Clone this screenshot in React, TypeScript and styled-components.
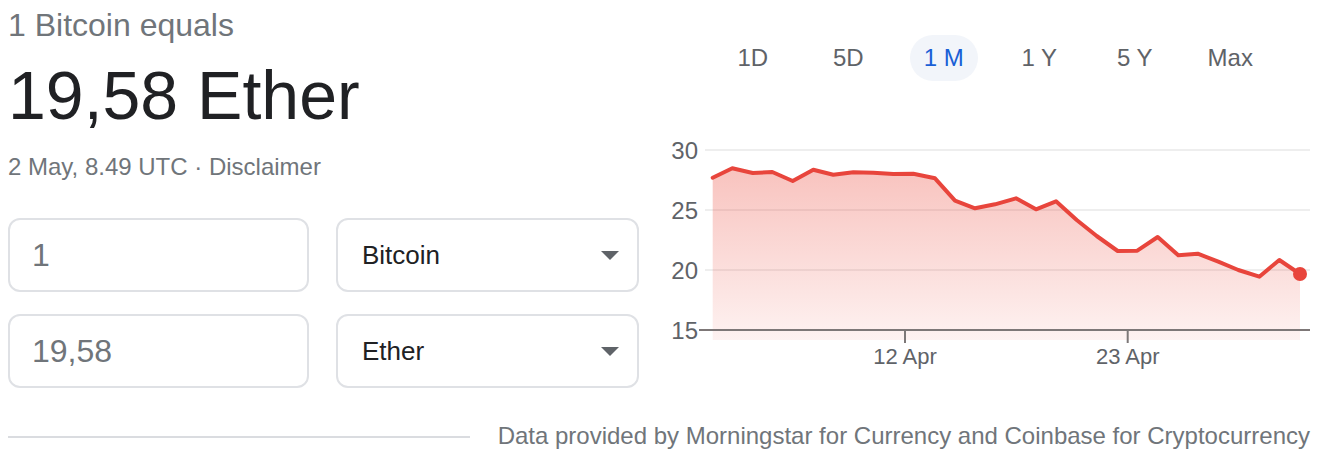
import React from "react";
import styled, { createGlobalStyle } from "styled-components";

const GlobalStyle = createGlobalStyle`
  html, body {
    margin: 0;
    padding: 0;
    background: #ffffff;
  }
  body {
    font-family: "Liberation Sans", Arial, sans-serif;
    width: 1332px;
    height: 472px;
    overflow: hidden;
  }
`;

const Page = styled.div`
  width: 1332px;
  display: flex;
  flex-direction: column;
`;

const Main = styled.div`
  display: flex;
  align-items: flex-start;
`;

const LeftCol = styled.div`
  width: 632px;
  padding-left: 8px;
  padding-top: 5px;
  display: flex;
  flex-direction: column;
`;

const Subtitle = styled.div`
  font-size: 32px;
  line-height: 40px;
  color: #70757a;
  white-space: nowrap;
`;

const Headline = styled.div`
  margin-top: 10px;
  font-size: 68px;
  line-height: 80px;
  color: #202124;
  white-space: nowrap;
`;

const Meta = styled.div`
  margin-top: 16px;
  font-size: 24px;
  line-height: 32px;
  color: #70757a;
  white-space: nowrap;
`;

const FieldGrid = styled.div`
  margin-top: 35px;
  display: grid;
  grid-template-columns: 301px 303px;
  column-gap: 27px;
  row-gap: 22px;
`;

const FieldBox = styled.div`
  box-sizing: border-box;
  height: 74px;
  border: 2px solid #dfe1e5;
  border-radius: 12px;
  display: flex;
  align-items: center;
  justify-content: space-between;
  padding: 0 18px 0 22px;
  background: #fff;
`;

const AmountText = styled.span`
  font-size: 32px;
  color: #70757a;
`;

const UnitText = styled.span`
  font-size: 26px;
  color: #202124;
  padding-left: 2px;
`;

const Caret = styled.span`
  width: 0;
  height: 0;
  border-left: 9px solid transparent;
  border-right: 9px solid transparent;
  border-top: 9px solid #5f6368;
`;

const RightCol = styled.div`
  margin-left: 20px;
  width: 660px;
  display: flex;
  flex-direction: column;
`;

const Tabs = styled.div`
  margin-top: 35px;
  margin-left: 45px;
  display: grid;
  grid-template-columns: repeat(6, 95.5px);
`;

const Tab = styled.div<{ $active?: boolean }>`
  justify-self: center;
  height: 46px;
  padding: 0 14px;
  border-radius: 23px;
  display: flex;
  align-items: center;
  font-size: 24px;
  white-space: pre;
  color: ${(p) => (p.$active ? "#1a5fd6" : "#5f6368")};
  background: ${(p) => (p.$active ? "#f2f5fa" : "transparent")};
`;

const ChartSvg = styled.svg`
  display: block;
  margin-top: 49px;
  font-family: "Liberation Sans", Arial, sans-serif;
`;

const Footer = styled.div`
  margin-top: 32px;
  display: flex;
  align-items: center;
  justify-content: space-between;
  padding: 0 22px 0 8px;
  height: 32px;
`;

const Divider = styled.div`
  width: 462px;
  height: 2px;
  background: #dadce0;
  margin-top: 2px;
`;

const SourceNote = styled.div`
  font-size: 24px;
  line-height: 32px;
  color: #70757a;
  white-space: nowrap;
`;

const OX = 660;
const OY = 130;

const rawPoints: [number, number][] = [
  [712.7, 177.7], [732.3, 168.3], [752.7, 173], [772.3, 172], [792.7, 181],
  [813.3, 169.7], [833.3, 174.7], [853.3, 172.3], [873.3, 172.7], [893.3, 174],
  [913.3, 173.7], [935, 178.3], [955, 200.7], [975, 208.3], [995, 204.3],
  [1016, 198.3], [1036, 209.3], [1056, 201.3], [1076.7, 220], [1096.7, 236],
  [1117.7, 251], [1137.3, 250.7], [1157.7, 237], [1178.3, 255.3], [1197.7, 253.7],
  [1218.3, 261.7], [1238.3, 270], [1259.3, 276.7], [1279.3, 260], [1300, 274],
];

const pts = rawPoints.map(([x, y]) => [x - OX, y - OY] as [number, number]);
const linePath = pts.map(([x, y], i) => `${i === 0 ? "M" : "L"}${x},${y}`).join(" ");
const first = pts[0];
const last = pts[pts.length - 1];
const areaPath = `${linePath} L${last[0]},210 L${first[0]},210 Z`;

const yTicks = [
  { label: "30", y: 20 },
  { label: "25", y: 80 },
  { label: "20", y: 140 },
  { label: "15", y: 200 },
];

const xTicks = [
  { label: "12 Apr", x: 245 },
  { label: "23 Apr", x: 467.7 },
];

function PriceChart() {
  return (
    <ChartSvg width={660} height={250} viewBox="0 0 660 250">
      <defs>
        <linearGradient id="areaFill" x1="0" y1="0" x2="0" y2="1">
          <stop offset="0%" stopColor="#ea4335" stopOpacity={0.32} />
          <stop offset="100%" stopColor="#ea4335" stopOpacity={0.07} />
        </linearGradient>
      </defs>
      {yTicks.slice(0, 3).map((t) => (
        <line key={t.label} x1={45} x2={650} y1={t.y} y2={t.y} stroke="#eeeeee" strokeWidth={2} />
      ))}
      <path d={areaPath} fill="url(#areaFill)" />
      <path d={linePath} fill="none" stroke="#e8453c" strokeWidth={4} strokeLinejoin="round" strokeLinecap="round" />
      <line x1={39} x2={650} y1={200} y2={200} stroke="#7d7777" strokeWidth={2} />
      {xTicks.map((t) => (
        <g key={t.label}>
          <line x1={t.x} x2={t.x} y1={200} y2={213} stroke="#7d7777" strokeWidth={2} />
          <text x={t.x} y={234} textAnchor="middle" fontSize={22} fill="#5f6368">
            {t.label}
          </text>
        </g>
      ))}
      {yTicks.map((t) => (
        <text key={t.label} x={38} y={t.y + 8.5} textAnchor="end" fontSize={24} fill="#5f6368">
          {t.label}
        </text>
      ))}
      <circle cx={last[0]} cy={last[1]} r={7} fill="#e8453c" />
    </ChartSvg>
  );
}

const ranges = ["1D", "5D", "1 M", "1 Y", "5 Y", "Max"];

export default function App() {
  return (
    <Page>
      <GlobalStyle />
      <Main>
        <LeftCol>
          <Subtitle>1 Bitcoin equals</Subtitle>
          <Headline>19,58 Ether</Headline>
          <Meta>2 May, 8.49 UTC · Disclaimer</Meta>
          <FieldGrid>
            <FieldBox>
              <AmountText>1</AmountText>
            </FieldBox>
            <FieldBox>
              <UnitText>Bitcoin</UnitText>
              <Caret />
            </FieldBox>
            <FieldBox>
              <AmountText>19,58</AmountText>
            </FieldBox>
            <FieldBox>
              <UnitText>Ether</UnitText>
              <Caret />
            </FieldBox>
          </FieldGrid>
        </LeftCol>
        <RightCol>
          <Tabs>
            {ranges.map((r) => (
              <Tab key={r} $active={r === "1 M"}>
                {r}
              </Tab>
            ))}
          </Tabs>
          <PriceChart />
        </RightCol>
      </Main>
      <Footer>
        <Divider />
        <SourceNote>Data provided by Morningstar for Currency and Coinbase for Cryptocurrency</SourceNote>
      </Footer>
    </Page>
  );
}
